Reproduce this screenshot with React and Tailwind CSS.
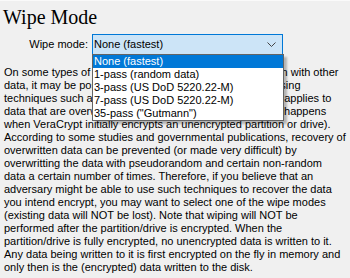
import React from "react";

const lines = [
  "On some types of storage media, when data is overwritten with other",
  "data, it may be possible to recover the overwritten data using",
  "techniques such as magnetic force microscopy. This also applies to",
  "data that are overwritten with their encrypted form (which happens",
  "when VeraCrypt initially encrypts an unencrypted partition or drive).",
  "According to some studies and governmental publications, recovery of",
  "overwritten data can be prevented (or made very difficult) by",
  "overwritting the data with pseudorandom and certain non-random",
  "data a certain number of times. Therefore, if you believe that an",
  "adversary might be able to use such techniques to recover the data",
  "you intend encrypt, you may want to select one of the wipe modes",
  "(existing data will NOT be lost). Note that wiping will NOT be",
  "performed after the partition/drive is encrypted. When the",
  "partition/drive is fully encrypted, no unencrypted data is written to it.",
  "Any data being written to it is first encrypted on the fly in memory and",
  "only then is the (encrypted) data written to the disk.",
];

const modes = [
  "None (fastest)",
  "1-pass (random data)",
  "3-pass (US DoD 5220.22-M)",
  "7-pass (US DoD 5220.22-M)",
  '35-pass ("Gutmann")',
];

const App = () => {
  return (
    <div className="w-[350px] h-[278px] bg-[#f0f0f0] overflow-hidden border-t border-[#fafafa] font-['Liberation_Sans',sans-serif] text-[11px] text-black">
      <h1 className="pt-[5px] pl-[3px] text-[20px] leading-[23px] font-['Liberation_Serif',serif]">
        Wipe Mode
      </h1>
      <div className="mt-[5px] flex items-center">
        <span className="w-[92px] pr-[4px] text-right leading-[13px]">Wipe mode:</span>
        <div className="relative w-[191px] h-[21px] border border-[#0078d7] bg-[#cce4f7] flex items-center pl-[1px]">
          <span className="leading-[13px]">None (fastest)</span>
          <svg className="absolute right-[6px] top-[7px]" width="9" height="5" viewBox="0 0 9 5">
            <path d="M0.5 0.5 L4.5 4.5 L8.5 0.5" fill="none" stroke="#444" strokeWidth="1" />
          </svg>
          {/* dropdown list */}
          <div className="absolute left-[-1px] top-[19px] w-[192px] h-[67px] bg-white border border-[#646464] shadow-[3px_3px_2px_rgba(0,0,0,0.25)] z-10">
            {modes.map((m, i) => (
              <div
                key={m}
                className={
                  i === 0
                    ? "h-[13px] leading-[13px] pl-[1px] bg-[#0078d7] text-white whitespace-nowrap"
                    : "h-[13px] leading-[13px] pl-[1px] whitespace-nowrap"
                }
              >
                {m}
              </div>
            ))}
          </div>
        </div>
      </div>
      <div className="mt-[11px] pl-[4px]">
        {lines.map((l, i) => (
          <div key={i} className="leading-[13px] h-[13px] whitespace-nowrap">
            {l}
          </div>
        ))}
      </div>
    </div>
  );
};

export default App;
